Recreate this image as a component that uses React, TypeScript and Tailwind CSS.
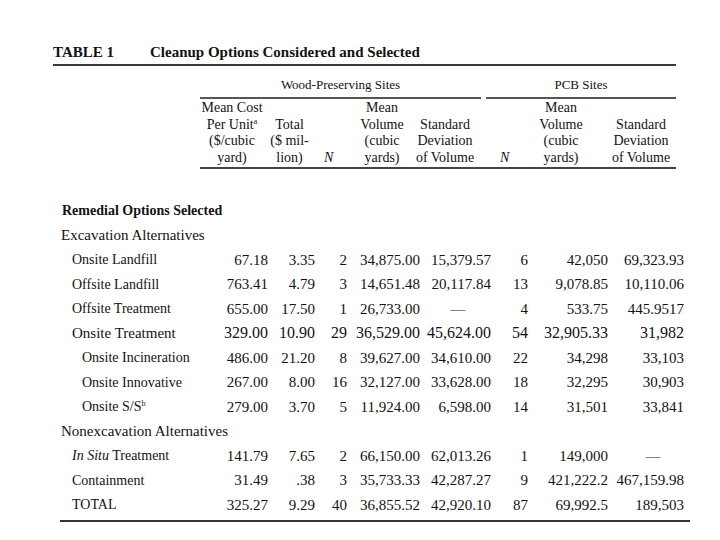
import React from "react";

// data rows: label | cost | total | N | mean vol | std dev | N | mean vol | std dev | end
const GRID =
  "grid grid-cols-[147px_68px_47px_32px_73px_71px_37px_80px_76px_6px]";

type Row = {
  label: React.ReactNode;
  indent: "one" | "two";
  big?: boolean;
  values: string[];
};

const Note = ({ children }: { children: string }) => (
  <span className="text-[8px] leading-none align-[5px]">{children}</span>
);

const excavation: Row[] = [
  {
    label: "Onsite Landfill",
    indent: "one",
    values: ["67.18", "3.35", "2", "34,875.00", "15,379.57", "6", "42,050", "69,323.93"],
  },
  {
    label: "Offsite Landfill",
    indent: "one",
    values: ["763.41", "4.79", "3", "14,651.48", "20,117.84", "13", "9,078.85", "10,110.06"],
  },
  {
    label: "Offsite Treatment",
    indent: "one",
    values: ["655.00", "17.50", "1", "26,733.00", "—", "4", "533.75", "445.9517"],
  },
  {
    label: "Onsite Treatment",
    indent: "one",
    big: true,
    values: ["329.00", "10.90", "29", "36,529.00", "45,624.00", "54", "32,905.33", "31,982"],
  },
  {
    label: "Onsite Incineration",
    indent: "two",
    values: ["486.00", "21.20", "8", "39,627.00", "34,610.00", "22", "34,298", "33,103"],
  },
  {
    label: "Onsite Innovative",
    indent: "two",
    values: ["267.00", "8.00", "16", "32,127.00", "33,628.00", "18", "32,295", "30,903"],
  },
  {
    label: (
      <>
        Onsite S/S<Note>b</Note>
      </>
    ),
    indent: "two",
    values: ["279.00", "3.70", "5", "11,924.00", "6,598.00", "14", "31,501", "33,841"],
  },
];

const nonexcavation: Row[] = [
  {
    label: (
      <>
        <i>In Situ</i> Treatment
      </>
    ),
    indent: "one",
    values: ["141.79", "7.65", "2", "66,150.00", "62,013.26", "1", "149,000", "—"],
  },
  {
    label: "Containment",
    indent: "one",
    values: ["31.49", ".38", "3", "35,733.33", "42,287.27", "9", "421,222.2", "467,159.98"],
  },
  {
    label: "TOTAL",
    indent: "one",
    values: ["325.27", "9.29", "40", "36,855.52", "42,920.10", "87", "69,992.5", "189,503"],
  },
];

const cellClass = (v: string, i: number) => {
  if (v !== "—") return "text-right whitespace-nowrap";
  return i === 4 ? "text-center pl-[5px]" : "text-center pl-[14px]";
};

const DataRow = ({ row }: { row: Row }) => (
  <div
    className={`${GRID} h-[24.5px] items-center ${
      row.big ? "text-[16px]" : "text-[15px]"
    }`}
  >
    <div
      className={`whitespace-nowrap ${row.big ? "text-[15px]" : "text-[14px]"} ${
        row.indent === "one" ? "pl-[19px]" : "pl-[29px]"
      }`}
    >
      {row.label}
    </div>
    {row.values.map((v, i) => (
      <div key={i} className={cellClass(v, i)}>
        {v}
      </div>
    ))}
    <div />
  </div>
);

const GroupHeading = ({ children }: { children: React.ReactNode }) => (
  <div className="h-[24.5px] flex items-center pl-[8px] text-[15px]">
    {children}
  </div>
);

export default function App() {
  return (
    <div className="w-[720px] h-[540px] bg-white text-[#121212] font-['Liberation_Serif',serif]">
      <div className="pt-[43px] pl-[53px]">
        <div className="w-[623px]">
          <div className="flex text-[15px] font-bold leading-[18px]">
            <span className="w-[97px]">TABLE 1</span>
            <span>Cleanup Options Considered and Selected</span>
          </div>
          <div className="mt-[3px] h-[2px] bg-[#3a3a3a]" />

          <div className="flex text-[13px] leading-[16.4px] mt-[11px]">
            <div className="w-[147px]" />
            <div className="w-[281px] pb-[4px] text-center border-b-2 border-[#555]">
              Wood-Preserving Sites
            </div>
            <div className="flex-1 ml-[5px] pb-[4px] text-center border-b-2 border-[#555]">
              PCB Sites
            </div>
          </div>

          <div className="flex text-[14px] leading-[16.4px]">
            <div className="w-[147px] shrink-0" />
            <div className="flex-1 grid grid-cols-[66px_50px_34px_64px_62px_38px_80px_82px] items-end pt-[1px] pb-[1px] border-b-2 border-[#444]">
              <div className="text-center whitespace-nowrap pr-[2px]">
                <div>Mean Cost</div>
                <div>
                  Per Unit<Note>a</Note>
                </div>
                <div>($/cubic</div>
                <div>yard)</div>
              </div>
              <div className="text-center pr-[3px] whitespace-nowrap">
                <div>Total</div>
                <div>($ mil-</div>
                <div>lion)</div>
              </div>
              <div className="text-left pl-[8px] italic">N</div>
              <div className="text-center whitespace-nowrap">
                <div>Mean</div>
                <div>Volume</div>
                <div>(cubic</div>
                <div>yards)</div>
              </div>
              <div className="text-center whitespace-nowrap">
                <div>Standard</div>
                <div>Deviation</div>
                <div>of Volume</div>
              </div>
              <div className="text-left pl-[24px] italic">N</div>
              <div className="text-center pl-[14px] whitespace-nowrap">
                <div>Mean</div>
                <div>Volume</div>
                <div>(cubic</div>
                <div>yards)</div>
              </div>
              <div className="text-center pl-[12px] whitespace-nowrap">
                <div>Standard</div>
                <div>Deviation</div>
                <div>of Volume</div>
              </div>
            </div>
          </div>
        </div>

        <div className="w-[637px]">
          <div className="mt-[29.5px]">
            <div className="h-[24.5px] flex items-center pl-[9px] text-[14px] font-bold">
              Remedial Options Selected
            </div>
            <GroupHeading>Excavation Alternatives</GroupHeading>
            {excavation.map((r, i) => (
              <DataRow key={i} row={r} />
            ))}
            <GroupHeading>Nonexcavation Alternatives</GroupHeading>
            {nonexcavation.map((r, i) => (
              <DataRow key={i} row={r} />
            ))}
          </div>
          <div className="mt-[3px] ml-[7px] h-[2px] bg-[#333]" />
        </div>
      </div>
    </div>
  );
}
